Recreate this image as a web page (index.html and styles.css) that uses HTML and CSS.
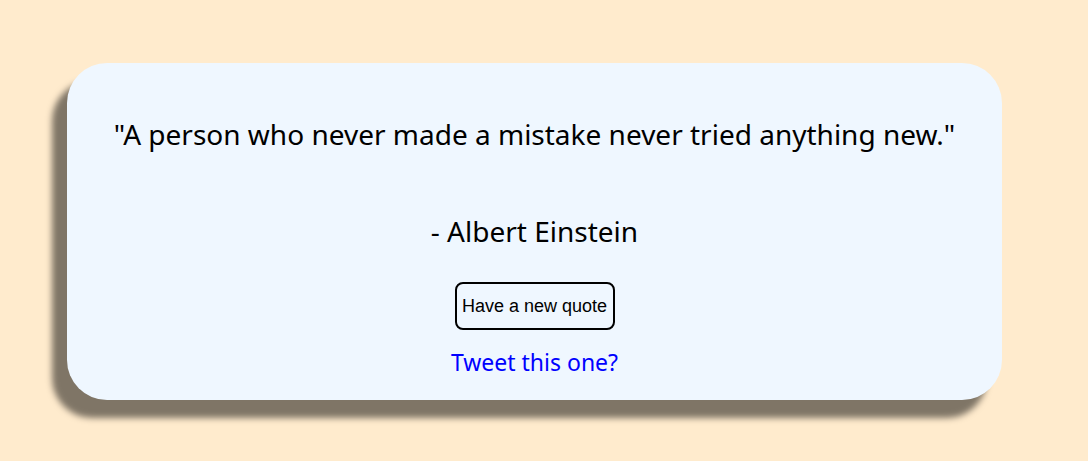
FILE: index.html
```html
<!DOCTYPE html>
<html>
<head>
<meta charset="utf-8">
<link rel="stylesheet" href="styles.css">
</head>
<body>
<main class="page">
  <section class="card">
    <p class="quote">"A person who never made a mistake never tried anything new."</p>
    <p class="author">- Albert Einstein</p>
    <button class="new-quote">Have a new quote</button>
    <a class="tweet" href="#">Tweet this one?</a>
  </section>
</main>
</body>
</html>
```
FILE: styles.css
```css
html, body {
  margin: 0;
  padding: 0;
  background: #ffebcd;
}
.page {
  padding: 63px 0 61px 67px;
}
.card {
  box-sizing: border-box;
  width: 935px;
  height: 337px;
  background: #eff7ff;
  border-radius: 40px;
  box-shadow: -15px 18px 6px rgba(0, 0, 0, 0.5);
  display: flex;
  flex-direction: column;
  align-items: center;
  padding-top: 52px;
  font-family: "Noto Sans", sans-serif;
  color: #000;
}
.quote {
  margin: 0;
  font-size: 28px;
  line-height: 38px;
}
.author {
  margin: 59px 0 0;
  font-size: 28px;
  line-height: 38px;
}
.new-quote {
  margin-top: 32px;
  width: 160px;
  height: 48px;
  border: 2px solid #000;
  border-radius: 8px;
  background: transparent;
  font-family: "Liberation Sans", Arial, sans-serif;
  font-size: 18px;
  color: #000;
  padding: 0;
}
.tweet {
  margin-top: 17px;
  font-size: 23px;
  line-height: 31px;
  color: #0000ff;
  text-decoration: none;
}
```
